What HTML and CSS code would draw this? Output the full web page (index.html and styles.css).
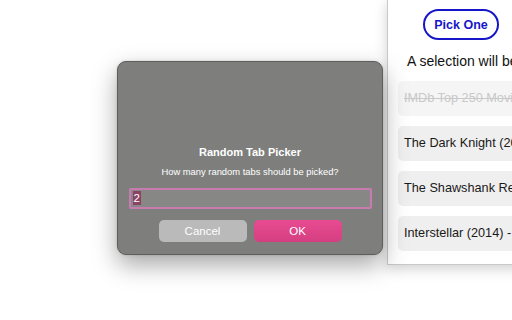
FILE: index.html
```html
<!DOCTYPE html>
<html>
<head lang="en">
    <meta charset="UTF-8">
    <title>Random Tab Picker</title>
    <link rel="stylesheet" href="styles.css">
</head>
<body>
    <!-- extension popup -->
    <div class="popup">
        <div class="popup-head">
            <button class="pickbtn">Pick One</button>
        </div>
        <p class="lead">A selection will be made from these tabs:</p>
        <ul class="tablist">
            <li class="tabitem done">IMDb Top 250 Movies</li>
            <li class="tabitem">The Dark Knight (2008) - IMDb</li>
            <li class="tabitem">The Shawshank Redemption (1994) - IMDb</li>
            <li class="tabitem">Interstellar (2014) - IMDb</li>
        </ul>
    </div>

    <!-- prompt dialog -->
    <div class="dialog">
        <div class="dialog-title">Random Tab Picker</div>
        <div class="dialog-msg">How many random tabs should be picked?</div>
        <div class="dialog-input"><span class="sel">2</span></div>
        <div class="dialog-buttons">
            <button class="dbtn cancel">Cancel</button>
            <button class="dbtn ok">OK</button>
        </div>
    </div>
</body>
</html>
```
FILE: styles.css
```css
html, body {
    margin: 0;
    padding: 0;
    width: 512px;
    height: 320px;
    overflow: hidden;
    background-color: #fff;
    font-family: "Liberation Sans", Arial, sans-serif;
}
body {
    position: relative;
}
.popup {
    position: absolute;
    left: 387px;
    top: -1px;
    width: 320px;
    height: 266px;
    box-sizing: border-box;
    border: 1px solid #c9c9c9;
    background-color: #fff;
    box-shadow: 0 4px 12px rgba(0, 0, 0, 0.18);
}
.popup-head {
    padding: 9px 0 0 35px;
}
.pickbtn {
    width: 76px;
    height: 31px;
    border: 2px solid #1616c8;
    border-radius: 16px;
    background-color: #fff;
    color: #1616c8;
    font-family: "Liberation Sans", Arial, sans-serif;
    font-weight: bold;
    font-size: 12.5px;
    padding: 0;
}
.lead {
    margin: 12px 0 0 19px;
    font-size: 14px;
    line-height: 18px;
    color: #111;
    white-space: nowrap;
}
.tablist {
    list-style: none;
    margin: 11px 0 0 10px;
    padding: 0;
    display: flex;
    flex-direction: column;
    gap: 10px;
}
.tabitem {
    height: 35px;
    line-height: 35px;
    padding-left: 6px;
    border-radius: 5px;
    background-color: #efefef;
    font-size: 12.7px;
    color: #1a1a1a;
    white-space: nowrap;
}
.tabitem.done {
    color: #c9c9c9;
    text-decoration: line-through;
    background-color: #f5f5f5;
}
.dialog {
    position: absolute;
    left: 117px;
    top: 61px;
    width: 266px;
    height: 194px;
    box-sizing: border-box;
    padding-top: 83px;
    border: 1px solid #5e5f5d;
    border-radius: 9px;
    background-color: #7e7f7d;
    box-shadow: 0 10px 24px rgba(0, 0, 0, 0.35), 0 0 3px rgba(0, 0, 0, 0.15);
    display: flex;
    flex-direction: column;
    align-items: center;
    color: #fff;
}
.dialog-title {
    font-size: 11px;
    font-weight: bold;
    line-height: 14px;
}
.dialog-msg {
    margin-top: 7px;
    font-size: 9.4px;
    line-height: 12px;
}
.dialog-input {
    margin-top: 10px;
    width: 243px;
    height: 21px;
    box-sizing: border-box;
    border: 2px solid #c87bb0;
    border-radius: 2px;
    background-color: #878886;
    padding-left: 2px;
    font-size: 11.5px;
    line-height: 17px;
}
.sel {
    background-color: #8b4263;
    padding: 1px 1px;
}
.dialog-buttons {
    margin-top: 11px;
    display: flex;
    gap: 7px;
}
.dbtn {
    width: 88px;
    height: 22px;
    border: none;
    border-radius: 5px;
    padding: 0;
    color: #fff;
    font-family: "Liberation Sans", Arial, sans-serif;
    font-size: 11.5px;
}
.cancel {
    background-color: #b9bab9;
}
.ok {
    background: linear-gradient(#e94b92, #d43f80);
}
```
